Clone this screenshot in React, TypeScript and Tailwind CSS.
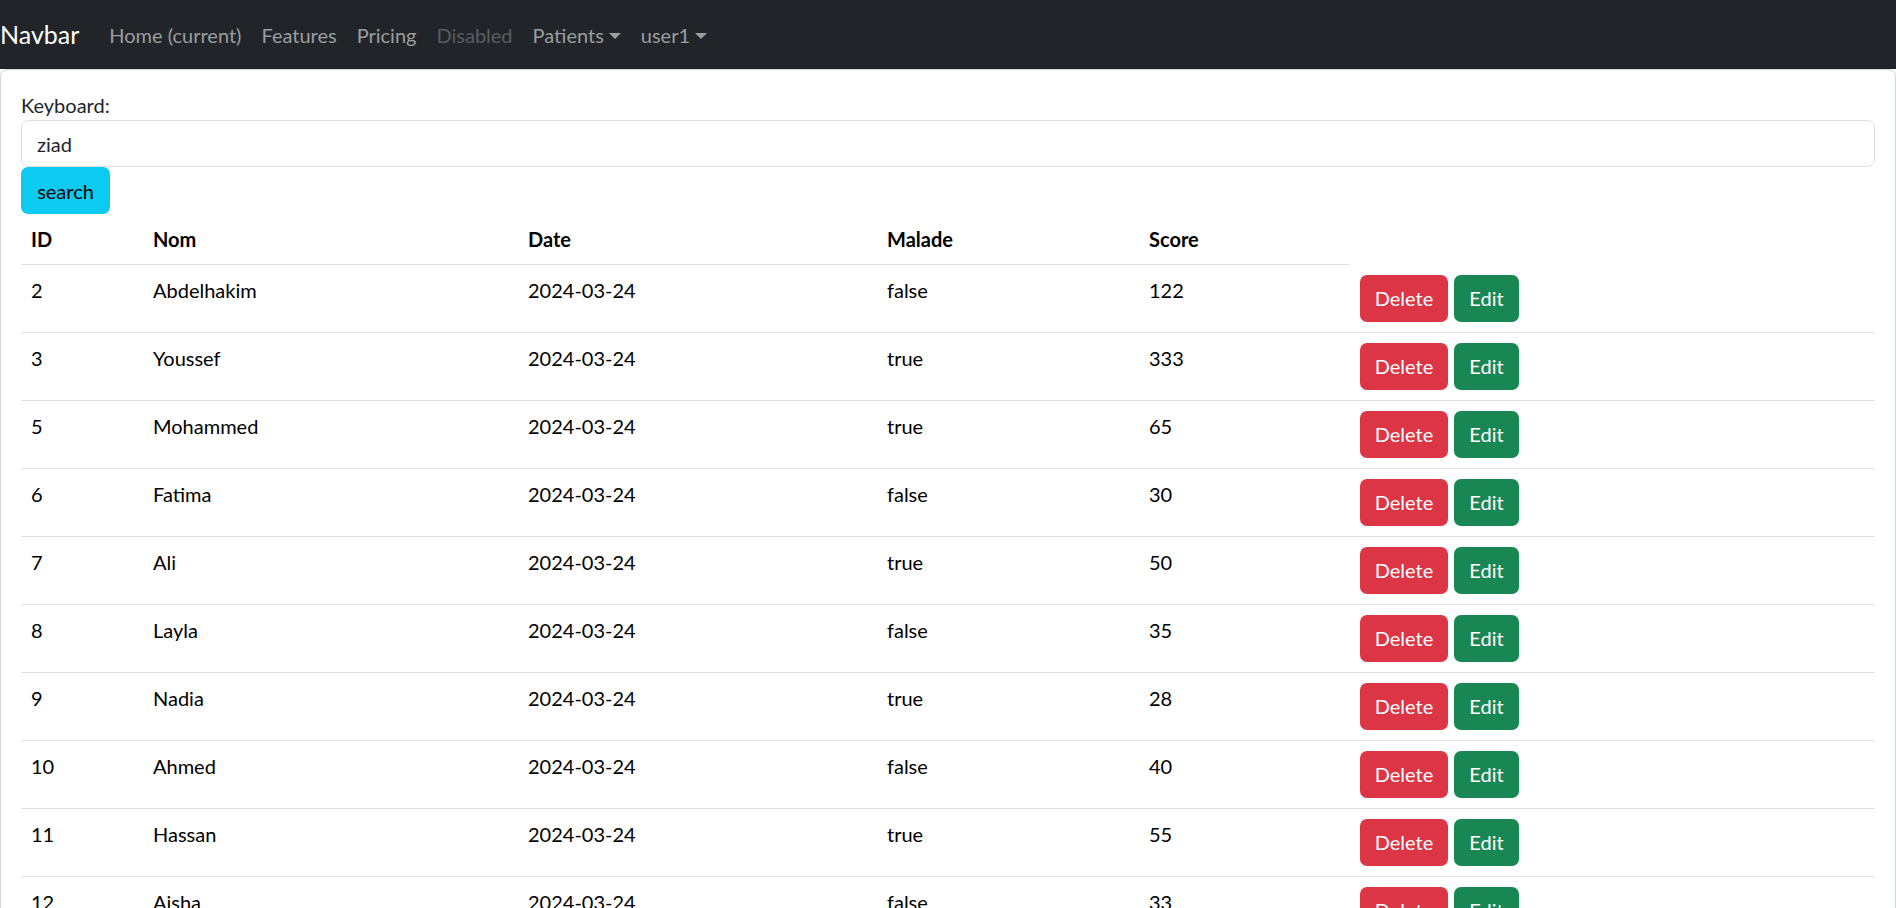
import React from "react";

const patients = [
  { id: 2, nom: "Abdelhakim", date: "2024-03-24", malade: false, score: 122 },
  { id: 3, nom: "Youssef", date: "2024-03-24", malade: true, score: 333 },
  { id: 5, nom: "Mohammed", date: "2024-03-24", malade: true, score: 65 },
  { id: 6, nom: "Fatima", date: "2024-03-24", malade: false, score: 30 },
  { id: 7, nom: "Ali", date: "2024-03-24", malade: true, score: 50 },
  { id: 8, nom: "Layla", date: "2024-03-24", malade: false, score: 35 },
  { id: 9, nom: "Nadia", date: "2024-03-24", malade: true, score: 28 },
  { id: 10, nom: "Ahmed", date: "2024-03-24", malade: false, score: 40 },
  { id: 11, nom: "Hassan", date: "2024-03-24", malade: true, score: 55 },
  { id: 12, nom: "Aisha", date: "2024-03-24", malade: false, score: 33 },
];

const Caret = () => (
  <span className="inline-block ml-[5px] align-[4px] w-0 h-0 border-t-[6px] border-t-current border-x-[6px] border-x-transparent" />
);

const App = () => {
  return (
    <div className="min-h-screen bg-white text-[#212529] text-[20px] leading-[30px] font-['Lato','Liberation_Sans',sans-serif]">
      {/* navbar */}
      <nav className="h-[69px] bg-[#212529] flex items-center">
        <a className="text-[25px] leading-[37px] text-white mr-[20px]">Navbar</a>
        <ul className="flex items-center">
          <li className="px-[10px] text-[#9b9d9f]">Home (current)</li>
          <li className="px-[10px] text-[#9b9d9f]">Features</li>
          <li className="px-[10px] text-[#9b9d9f]">Pricing</li>
          <li className="px-[10px] text-[#595c5f]">Disabled</li>
          <li className="px-[10px] text-[#9b9d9f]">
            Patients
            <Caret />
          </li>
          <li className="px-[10px] text-[#9b9d9f]">
            user1
            <Caret />
          </li>
        </ul>
      </nav>

      {/* card */}
      <div className="border border-[#d3d4d5] rounded-[7px]">
        <div className="p-[20px]">
          <label className="block">Keyboard:</label>
          <input
            readOnly
            value="ziad"
            className="block w-full h-[47px] px-[15px] border border-[#dee2e6] rounded-[7px] outline-none text-[#212529]"
          />
          <button className="h-[47px] w-[89px] bg-[#0dcaf0] text-black rounded-[7px]">
            search
          </button>

          <table className="w-full table-fixed border-collapse text-black">
            <colgroup>
              <col className="w-[122px]" />
              <col className="w-[375px]" />
              <col className="w-[359px]" />
              <col className="w-[262px]" />
              <col className="w-[211px]" />
              <col />
            </colgroup>
            <thead>
              <tr>
                {["ID", "Nom", "Date", "Malade", "Score"].map((h) => (
                  <th
                    key={h}
                    className="text-left font-bold px-[10px] py-[10px] border-b border-[#dee2e6]"
                  >
                    {h}
                  </th>
                ))}
              </tr>
            </thead>
            <tbody>
              {patients.map((p) => (
                <tr key={p.id}>
                  <td className="align-top px-[10px] py-[10px] border-b border-[#dee2e6]">{p.id}</td>
                  <td className="align-top px-[10px] py-[10px] border-b border-[#dee2e6]">{p.nom}</td>
                  <td className="align-top px-[10px] py-[10px] border-b border-[#dee2e6]">{p.date}</td>
                  <td className="align-top px-[10px] py-[10px] border-b border-[#dee2e6]">
                    {p.malade ? "true" : "false"}
                  </td>
                  <td className="align-top px-[10px] py-[10px] border-b border-[#dee2e6]">{p.score}</td>
                  <td className="align-top px-[10px] py-[10px] border-b border-[#dee2e6]">
                    <div className="flex gap-[6px]">
                      <button className="h-[47px] w-[88px] bg-[#dc3545] text-white rounded-[7px]">
                        Delete
                      </button>
                      <button className="h-[47px] w-[65px] bg-[#198754] text-white rounded-[7px]">
                        Edit
                      </button>
                    </div>
                  </td>
                </tr>
              ))}
            </tbody>
          </table>
        </div>
      </div>
    </div>
  );
};

export default App;
